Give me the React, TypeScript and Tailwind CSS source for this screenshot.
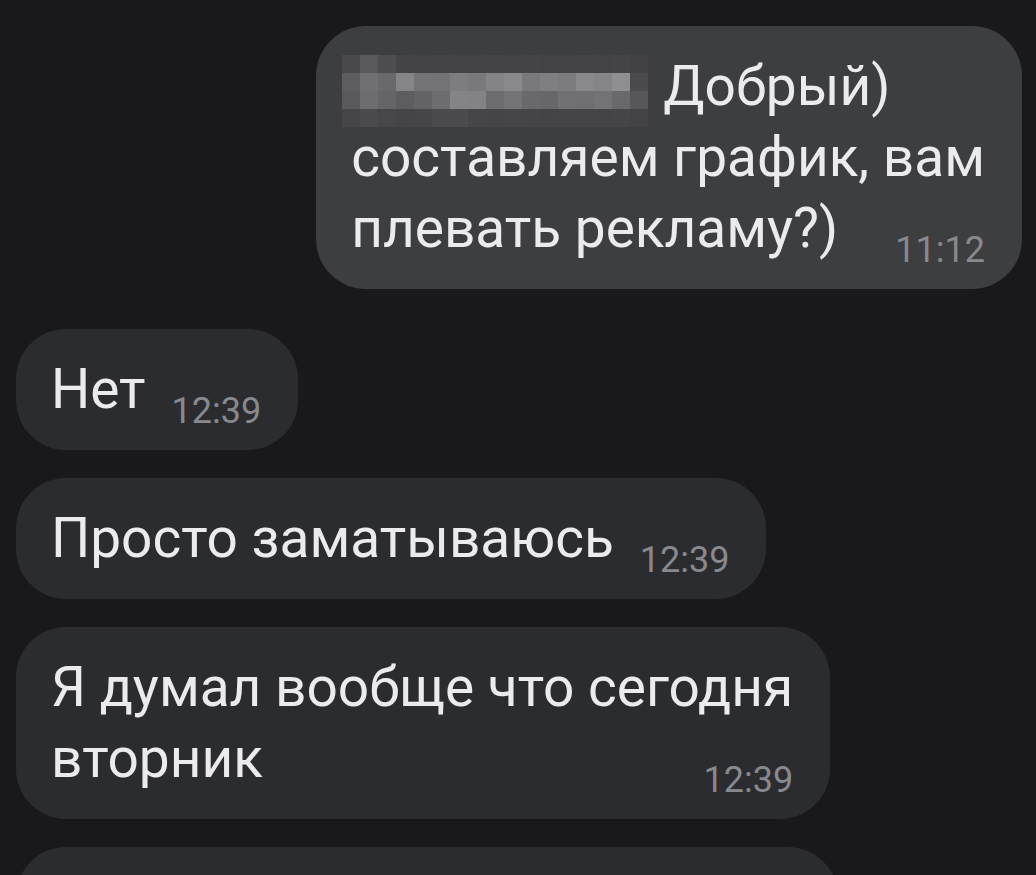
import React from "react";

type Msg = {
  lines: string[];
  time: string;
};

const incoming: Msg[] = [
  { lines: ["Нет"], time: "12:39" },
  { lines: ["Просто заматываюсь"], time: "12:39" },
  { lines: ["Я думал вообще что сегодня", "вторник"], time: "12:39" },
];

// pixelated (blurred) name at the start of the outgoing message
const mosaic = [
  ["#49494b", "#59595b", "#4d4d4f", "#444446", "#434345", "#444446", "#434345", "#434345", "#444446", "#434345", "#444446", "#434345", "#434345", "#444446", "#434345", "#444446", "#424244"],
  ["#5d5d5f", "#707072", "#69696b", "#858587", "#747476", "#737375", "#7d7d7f", "#79797b", "#848486", "#89898b", "#79797b", "#7f7f81", "#7c7c7e", "#89898b", "#858587", "#8f8f91", "#4a4a4c"],
  ["#59595b", "#6d6d6f", "#656567", "#5d5d5f", "#636365", "#6d6d6f", "#848486", "#838385", "#6d6d6f", "#737375", "#69696b", "#676769", "#717173", "#6f6f71", "#737375", "#69696b", "#575759"],
  ["#464648", "#4b4b4d", "#474749", "#454547", "#464648", "#4a4a4c", "#4b4b4d", "#464648", "#454547", "#464648", "#454547", "#444446", "#454547", "#454547", "#444446", "#454547", "#434345"],
];

const Time = ({ t }: { t: string }) => (
  <span className="ml-[26px] mb-[-4px] shrink-0 text-[36px] leading-none text-[#88898c]">
    {t}
  </span>
);

const Bubble = ({ msg }: { msg: Msg }) => {
  const last = msg.lines[msg.lines.length - 1];
  return (
    <div className="self-start w-fit rounded-[50px] bg-[#2b2c2f] pl-[35px] pr-[37px] py-[25px]">
      <div className="flex flex-col">
        {msg.lines.slice(0, -1).map((l) => (
          <div key={l} className="whitespace-nowrap">
            {l}
          </div>
        ))}
        <div className="flex items-end justify-between">
          <span className="whitespace-nowrap">{last}</span>
          <Time t={msg.time} />
        </div>
      </div>
    </div>
  );
};

export default function App() {
  return (
    <div
      className="min-h-screen bg-[#19191b] pl-[16px] pr-[14px] pt-[26px] text-[55px] leading-[71px] text-[#ebebed] flex flex-col"
      style={{ fontFamily: "Roboto, 'Noto Sans', sans-serif" }}
    >
      {/* outgoing */}
      <div className="self-end w-fit rounded-[50px] bg-[#3d3e40] pl-[35px] pr-[37px] py-[25px]">
        <div className="flex flex-col">
          <div className="flex whitespace-nowrap">
            <div className="ml-[-9px] mr-[15px] mt-[4px] mb-[-5px] grid grid-cols-[repeat(17,18px)] grid-rows-[repeat(4,18px)]">
              {mosaic.flat().map((c, i) => (
                <div key={i} style={{ backgroundColor: c }} />
              ))}
            </div>
            <span>Добрый)</span>
          </div>
          <div className="whitespace-nowrap">составляем график, вам</div>
          <div className="flex items-end justify-between">
            <span className="whitespace-nowrap">плевать рекламу?)</span>
            <Time t="11:12" />
          </div>
        </div>
      </div>

      {/* incoming */}
      <div className="mt-[40px] flex flex-col gap-[28px]">
        {incoming.map((m, i) => (
          <Bubble key={i} msg={m} />
        ))}
        <div className="w-[822px] h-[121px] shrink-0 rounded-[50px] bg-[#2b2c2f]" />
      </div>
    </div>
  );
}
